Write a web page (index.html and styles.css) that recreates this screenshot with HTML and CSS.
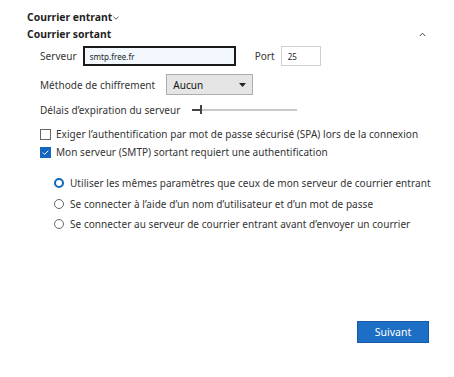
FILE: index.html
```html
<!DOCTYPE html>
<html lang="fr">
<head>
<meta charset="utf-8">
<link rel="stylesheet" href="styles.css">
</head>
<body>
<div class="page">
  <div class="head head-in">Courrier entrant<svg class="chev" width="6" height="4" viewBox="0 0 6 4"><path d="M0.5 0.8 L3 3.2 L5.5 0.8" fill="none" stroke="#444" stroke-width="0.9"/></svg></div>
  <div class="head head-out"><span>Courrier sortant</span><svg class="caret" width="7" height="5" viewBox="0 0 7 5"><path d="M0.8 4 L3.5 1.2 L6.2 4" fill="none" stroke="#444" stroke-width="1"/></svg></div>
  <div class="fields">
    <div class="row row-server">
      <span class="lbl">Serveur</span>
      <div class="input input-server">smtp.free.fr</div>
      <span class="lbl lbl-port">Port</span>
      <div class="input input-port">25</div>
    </div>
    <div class="row row-method">
      <span class="lbl">Méthode de chiffrement</span>
      <div class="select"><span>Aucun</span><svg width="7" height="4" viewBox="0 0 7 4"><path d="M0 0 L7 0 L3.5 4 Z" fill="#222"/></svg></div>
    </div>
    <div class="row row-delay">
      <span class="lbl">Délais d’expiration du serveur</span>
      <div class="slider"><div class="fill"></div><div class="thumb"></div></div>
    </div>
    <div class="row row-check">
      <span class="box"></span>
      <span class="lbl">Exiger l’authentification par mot de passe sécurisé (SPA) lors de la connexion</span>
    </div>
    <div class="row row-check row-check2">
      <span class="box checked"><svg width="11" height="11" viewBox="0 0 11 11"><path d="M2.8 5.6 L4.6 7.4 L8.3 3.7" fill="none" stroke="#fff" stroke-width="1"/></svg></span>
      <span class="lbl">Mon serveur (SMTP) sortant requiert une authentification</span>
    </div>
    <div class="radios">
      <div class="row row-radio"><span class="radio on"></span><span class="lbl">Utiliser les mêmes paramètres que ceux de mon serveur de courrier entrant</span></div>
      <div class="row row-radio"><span class="radio"></span><span class="lbl">Se connecter à l’aide d’un nom d’utilisateur et d’un mot de passe</span></div>
      <div class="row row-radio"><span class="radio"></span><span class="lbl">Se connecter au serveur de courrier entrant avant d’envoyer un courrier</span></div>
    </div>
  </div>
  <div class="footer"><button class="btn">Suivant</button></div>
</div>
</body>
</html>
```
FILE: styles.css
```css
html, body {
  margin: 0;
  padding: 0;
  background: #fff;
}
body {
  font-family: "Noto Sans", "Open Sans", sans-serif;
  color: #333;
  font-size: 10px;
  letter-spacing: 0.05px;
}
.page {
  padding: 10px 25px 0 27px;
  display: flex;
  flex-direction: column;
}
.lbl {
  white-space: nowrap;
  flex: none;
}
.head {
  font-weight: bold;
  color: #1f1f1f;
  font-size: 10.4px;
  height: 14px;
  display: flex;
  align-items: center;
  letter-spacing: 0;
  white-space: nowrap;
}
.head-in .chev {
  margin-left: 1px;
  margin-top: 2px;
}
.head-out {
  margin-top: 3px;
  justify-content: space-between;
  padding-right: 3px;
}
.fields {
  padding-left: 13px;
  display: flex;
  flex-direction: column;
}
.row {
  display: flex;
  align-items: center;
}
.row-server {
  margin-top: 5px;
  height: 20px;
}
.input {
  box-sizing: border-box;
  height: 20px;
  display: flex;
  align-items: center;
  font-size: 8px;
  color: #222;
  flex: none;
}
.input-server {
  margin-left: 6px;
  width: 153px;
  border: 2px solid #1a1a1a;
  background: #f2f8fe;
  padding-left: 5px;
}
.lbl-port {
  margin-left: 19px;
}
.input-port {
  margin-left: 6px;
  width: 40px;
  border: 1px solid #cfcfcf;
  background: #fff;
  padding-left: 6px;
}
.row-method {
  margin-top: 8px;
  height: 21px;
}
.select {
  margin-left: 11px;
  box-sizing: border-box;
  width: 87px;
  height: 21px;
  background: #e5e5e5;
  border: 1px solid #adadad;
  display: flex;
  align-items: center;
  justify-content: space-between;
  padding: 0 6px 0 6px;
  color: #111;
  flex: none;
}
.row-delay {
  margin-top: 7px;
  height: 16px;
}
.slider {
  position: relative;
  margin-left: 12px;
  width: 105px;
  height: 2px;
  background: #c8c8c8;
  flex: none;
}
.slider .fill {
  width: 9px;
  height: 2px;
  background: #444;
}
.slider .thumb {
  position: absolute;
  left: 8px;
  top: -4px;
  width: 2px;
  height: 9px;
  background: #444;
}
.row-check {
  margin-top: 8px;
  height: 16px;
}
.row-check2 {
  margin-top: 2px;
}
.box {
  box-sizing: border-box;
  width: 11px;
  height: 11px;
  border: 1px solid #666;
  background: #fff;
  margin-right: 5px;
  flex: none;
}
.box.checked {
  background: #1467c0;
  border-color: #1467c0;
  position: relative;
}
.box.checked svg {
  position: absolute;
  left: -1px;
  top: -1px;
}
.radios {
  margin-top: 13px;
  padding-left: 14px;
  display: flex;
  flex-direction: column;
}
.row-radio {
  height: 20.5px;
}
.radio {
  box-sizing: border-box;
  width: 10px;
  height: 10px;
  border-radius: 50%;
  border: 1px solid #666;
  margin-right: 6px;
  flex: none;
}
.radio.on {
  border: 2.6px solid #1467c0;
}
.footer {
  display: flex;
  justify-content: flex-end;
  margin-top: 86px;
}
.btn {
  width: 72px;
  height: 22px;
  background: #1c6fc4;
  border: 1px solid #155ca8;
  color: #fff;
  font-family: "Noto Sans", "Open Sans", sans-serif;
  font-size: 10.5px;
  padding: 0;
}
```
